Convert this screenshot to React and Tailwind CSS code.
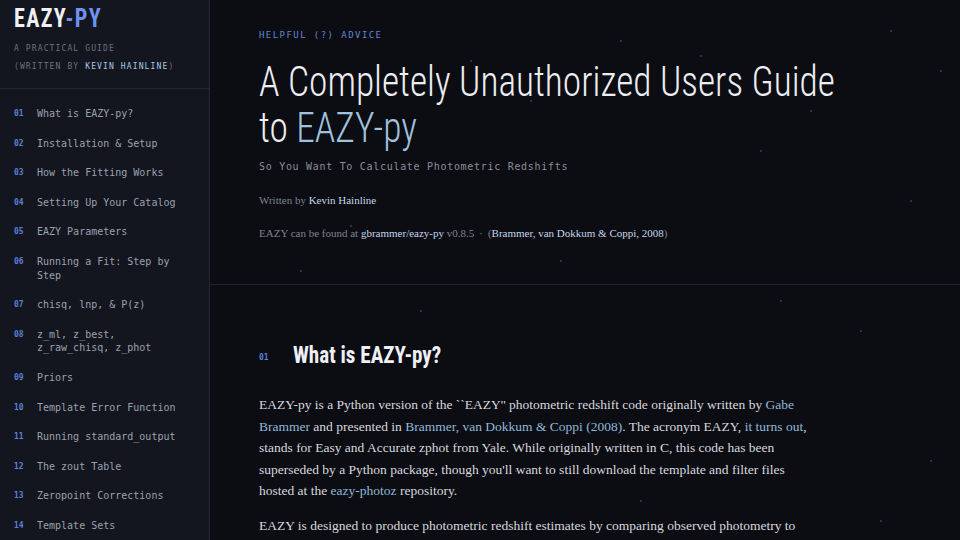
import React from "react";

const nav = [
  ["01", "What is EAZY-py?"],
  ["02", "Installation & Setup"],
  ["03", "How the Fitting Works"],
  ["04", "Setting Up Your Catalog"],
  ["05", "EAZY Parameters"],
  ["06", "Running a Fit: Step by Step"],
  ["07", "chisq, lnp, & P(z)"],
  ["08", "z_ml, z_best, z_raw_chisq, z_phot"],
  ["09", "Priors"],
  ["10", "Template Error Function"],
  ["11", "Running standard_output"],
  ["12", "The zout Table"],
  ["13", "Zeropoint Corrections"],
  ["14", "Template Sets"],
];

const stars = [
  [620, 40], [700, 55], [890, 30], [940, 70], [530, 100], [760, 150], [910, 200],
  [560, 260], [780, 300], [860, 330], [420, 310], [690, 420], [930, 460], [515, 470],
  [880, 520], [640, 500], [300, 270], [470, 60], [810, 110], [350, 225],
];

export default function App() {
  return (
    <div className="w-[960px] h-[540px] overflow-hidden flex bg-[#0c0d12] text-[#d9dbe2]">
      <aside className="w-[210px] shrink-0 h-full overflow-hidden bg-[#13161e] border-r border-[#232738] flex flex-col">
        <div className="px-[14px] pt-[3px] pb-[12px] border-b border-[#222636]">
          <div className="origin-left scale-x-[0.85] whitespace-nowrap font-['Roboto',sans-serif] font-bold [font-stretch:condensed] text-[26px] leading-[30px] tracking-[0.06em] text-[#eef0f5]">
            EAZY<span className="text-[#6d93f0]">-PY</span>
          </div>
          <div className="mt-[7px] font-['DejaVu_Sans_Mono',monospace] text-[8px] leading-[18px] tracking-[0.14em] text-[#6c7180]">
            <div>A PRACTICAL GUIDE</div>
            <div>
              (WRITTEN BY <span className="text-[#a9c8e4]">KEVIN HAINLINE</span>)
            </div>
          </div>
        </div>
        <nav className="pt-[10px] flex flex-col">
          {nav.map(([n, label]) => (
            <div key={n} className="flex items-start px-[14px] py-[8px]">
              <span className="w-[23px] shrink-0 font-['DejaVu_Sans_Mono',monospace] font-bold text-[8px] leading-[13.6px] text-[#5b80d8]">
                {n}
              </span>
              <span className="w-[152px] font-['DejaVu_Sans_Mono',monospace] text-[10px] leading-[13.6px] text-[#9ba1af]">
                {label}
              </span>
            </div>
          ))}
        </nav>
      </aside>

      <main className="relative flex-1 h-full overflow-hidden">
        {stars.map(([x, y], i) => (
          <span
            key={i}
            className="absolute w-[2px] h-[2px] rounded-full bg-[#3a3f4d]"
            style={{ left: x - 210, top: y }}
          />
        ))}
        <header className="pl-[49px] pt-[29px] h-[285px] border-b border-[#1f2231]">
          <div className="font-['DejaVu_Sans_Mono',monospace] text-[9px] leading-[12px] tracking-[0.16em] text-[#5f84d8]">
            HELPFUL (?) ADVICE
          </div>
          <h1 className="mt-[18px] whitespace-nowrap origin-left scale-x-[0.89] font-['Roboto',sans-serif] font-light [font-stretch:condensed] text-[42px] leading-[46px] text-[#eceef3]">
            A Completely Unauthorized Users Guide
            <br />
            to <span className="text-[#9fc3de]">EAZY-py</span>
          </h1>
          <div className="mt-[9px] font-['DejaVu_Sans_Mono',monospace] text-[10px] leading-[14px] tracking-[0.07em] text-[#8a8f9b]">
            So You Want To Calculate Photometric Redshifts
          </div>
          <div className="mt-[19px] font-['Liberation_Serif',serif] text-[11px] leading-[14px] text-[#7e8391]">
            Written by <span className="text-[#c3d7ea]">Kevin Hainline</span>
          </div>
          <div className="mt-[19px] font-['Liberation_Serif',serif] text-[11px] leading-[14px] text-[#7e8391]">
            EAZY can be found at <span className="text-[#c3d7ea]">gbrammer/eazy-py</span> v0.8.5
            <span className="mx-[5px]">·</span>(<span className="text-[#c3d7ea]">Brammer, van Dokkum &amp; Coppi, 2008</span>)
          </div>
        </header>

        <section className="pl-[49px] pt-[57px]">
          <div className="flex items-center">
            <span className="w-[34px] shrink-0 font-['DejaVu_Sans_Mono',monospace] font-bold text-[8px] text-[#5b80d8] pt-[5px]">
              01
            </span>
            <h2 className="whitespace-nowrap origin-left scale-x-[0.88] font-['Roboto',sans-serif] font-bold [font-stretch:condensed] text-[24px] leading-[26px] text-[#eef0f5]">
              What is EAZY-py?
            </h2>
          </div>
          <p className="mt-[26px] w-[580px] font-['Liberation_Serif',serif] text-[13.5px] leading-[21.5px] text-[#d6d8df]">
            EAZY-py is a Python version of the ``EAZY'' photometric redshift code originally written by{" "}
            <span className="text-[#8fb9da]">Gabe</span>
            <br />
            <span className="text-[#8fb9da]">Brammer</span> and presented in{" "}
            <span className="text-[#8fb9da]">Brammer, van Dokkum &amp; Coppi (2008)</span>. The acronym EAZY,{" "}
            <span className="text-[#8fb9da]">it turns out</span>,
            <br />
            stands for Easy and Accurate zphot from Yale. While originally written in C, this code has been
            <br />
            superseded by a Python package, though you'll want to still download the template and filter files
            <br />
            hosted at the <span className="text-[#8fb9da]">eazy-photoz</span> repository.
          </p>
          <p className="mt-[13px] w-[580px] font-['Liberation_Serif',serif] text-[13.5px] leading-[21.5px] text-[#d6d8df]">
            EAZY is designed to produce photometric redshift estimates by comparing observed photometry to
          </p>
        </section>
      </main>
    </div>
  );
}
